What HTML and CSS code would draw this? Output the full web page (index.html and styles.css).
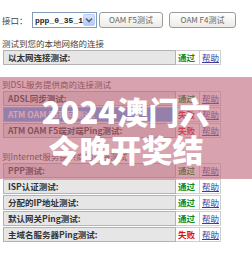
FILE: index.html
```html
<!DOCTYPE html>
<html>
<head>
<meta charset="utf-8">
<link rel="stylesheet" href="styles.css">
</head>
<body>
<div class="page">
  <div class="toolbar">
    <span class="lbl">接口：</span>
    <div class="select">
      <span class="select-text">ppp_0_35_1</span>
      <span class="select-btn"><svg width="8" height="6" viewBox="0 0 8 6"><path d="M1 1.5 L4 4.5 L7 1.5" fill="none" stroke="#4d6185" stroke-width="1.6"/></svg></span>
    </div>
    <button class="btn btn-f5">OAM F5测试</button>
    <button class="btn btn-f4">OAM F4测试</button>
  </div>

  <div class="sec-title sec-1">测试到您的本地网络的连接</div>
  <div class="tbl">
    <div class="row"><div class="c-label">以太网连接测试:</div><div class="c-res pass">通过</div><div class="c-help"><a href="#">帮助</a></div></div>
  </div>

  <div class="sec-title sec-2">到DSL服务提供商的连接测试</div>
  <div class="tbl">
    <div class="row"><div class="c-label">ADSL同步测试:</div><div class="c-res pass">通过</div><div class="c-help"><a href="#">帮助</a></div></div>
    <div class="row"><div class="c-label selected">ATM OAM F5环回测试:</div><div class="c-res fail">失败</div><div class="c-help"><a href="#">帮助</a></div></div>
    <div class="row"><div class="c-label">ATM OAM F5端对端Ping测试:</div><div class="c-res fail">失败</div><div class="c-help"><a href="#">帮助</a></div></div>
  </div>

  <div class="sec-title sec-3">到Internet服务提供商的连接测试</div>
  <div class="tbl">
    <div class="row"><div class="c-label">PPP测试:</div><div class="c-res pass">通过</div><div class="c-help"><a href="#">帮助</a></div></div>
    <div class="row"><div class="c-label">ISP认证测试:</div><div class="c-res pass">通过</div><div class="c-help"><a href="#">帮助</a></div></div>
    <div class="row"><div class="c-label">分配的IP地址测试:</div><div class="c-res pass">通过</div><div class="c-help"><a href="#">帮助</a></div></div>
    <div class="row"><div class="c-label">默认网关Ping测试:</div><div class="c-res pass">通过</div><div class="c-help"><a href="#">帮助</a></div></div>
    <div class="row"><div class="c-label">主域名服务器Ping测试:</div><div class="c-res fail">失败</div><div class="c-help"><a href="#">帮助</a></div></div>
  </div>
</div>

<div class="overlay">
  <div class="ov-text">2024澳门六<br>今晚开奖结</div>
</div>
</body>
</html>
```

FILE: styles.css
```css
html, body {
  margin: 0;
  padding: 0;
}
body {
  width: 252px;
  height: 258px;
  overflow: hidden;
  background: #ffffff;
  font-family: "Noto Sans CJK SC", "Noto Sans", sans-serif;
  color: #333;
  position: relative;
}
.page {
  padding: 12px 0 0 2px;
}
.toolbar {
  display: flex;
  align-items: center;
  height: 16px;
}
.lbl {
  width: 30px;
  font-size: 8.5px;
  color: #444;
  line-height: 16px;
}
.select {
  width: 65px;
  height: 16px;
  box-sizing: border-box;
  border: 1px solid #7f9db9;
  display: flex;
  align-items: center;
  justify-content: space-between;
  padding: 0 1px 0 2px;
  background: #fff;
}
.select-text {
  font-family: "Liberation Mono", monospace;
  font-weight: bold;
  font-size: 8px;
  color: #222;
}
.select-btn {
  width: 12px;
  height: 12px;
  box-sizing: border-box;
  border: 1px solid #b9cbf6;
  border-radius: 2px;
  background: linear-gradient(#dbe6fd, #b4c8f6);
  display: flex;
  align-items: center;
  justify-content: center;
}
.btn {
  height: 16px;
  box-sizing: border-box;
  padding: 0;
  border: 1px solid #9a9a9a;
  border-radius: 3px;
  background: linear-gradient(#ffffff, #ecebe6);
  font-family: "Noto Sans CJK SC", sans-serif;
  font-size: 8px;
  color: #666;
  line-height: 14px;
}
.btn-f5 {
  margin-left: 2px;
  width: 64px;
}
.btn-f4 {
  margin-left: 6px;
  width: 67px;
}
.sec-title {
  font-size: 8.5px;
  line-height: 13px;
  color: #444;
  white-space: nowrap;
}
.sec-1 { margin-top: 9px; }
.sec-2 { margin-top: 13px; }
.sec-3 { margin-top: 12px; }
.tbl {
  margin-left: 1px;
  width: 218px;
  display: flex;
  flex-direction: column;
  gap: 1px;
}
.row {
  display: flex;
  height: 15px;
}
.c-label {
  flex: 0 0 173px;
  box-sizing: border-box;
  background: #e6e6e6;
  border: 1px solid #b3b3b3;
  padding-left: 4px;
  font-size: 8.5px;
  line-height: 13px;
  font-weight: bold;
  color: #333;
  white-space: nowrap;
  overflow: hidden;
}
.c-label.selected {
  background: #5aa8f8;
  color: #fff;
}
.c-res, .c-help {
  box-sizing: border-box;
  border: 1px solid #cfcfcf;
  border-left: none;
  font-size: 8.5px;
  line-height: 13px;
  white-space: nowrap;
}
.c-res {
  flex: 0 0 24px;
  padding-left: 2px;
  font-weight: bold;
}
.c-help {
  flex: 0 0 21px;
  padding-left: 2px;
}
.pass { color: #118a11; }
.fail { color: #e01010; }
.c-help a {
  color: #3b3b9c;
  text-decoration: underline;
}
.overlay {
  position: absolute;
  left: 0;
  top: 77px;
  width: 252px;
  height: 102px;
  background: rgba(190, 100, 120, 0.6);
  display: flex;
  align-items: center;
  justify-content: center;
}
.ov-text {
  color: #fff;
  font-family: "Noto Sans CJK SC", sans-serif;
  font-weight: 900;
  font-size: 31px;
  line-height: 38px;
  text-align: center;
  padding-top: 3px;
  white-space: nowrap;
}
```
